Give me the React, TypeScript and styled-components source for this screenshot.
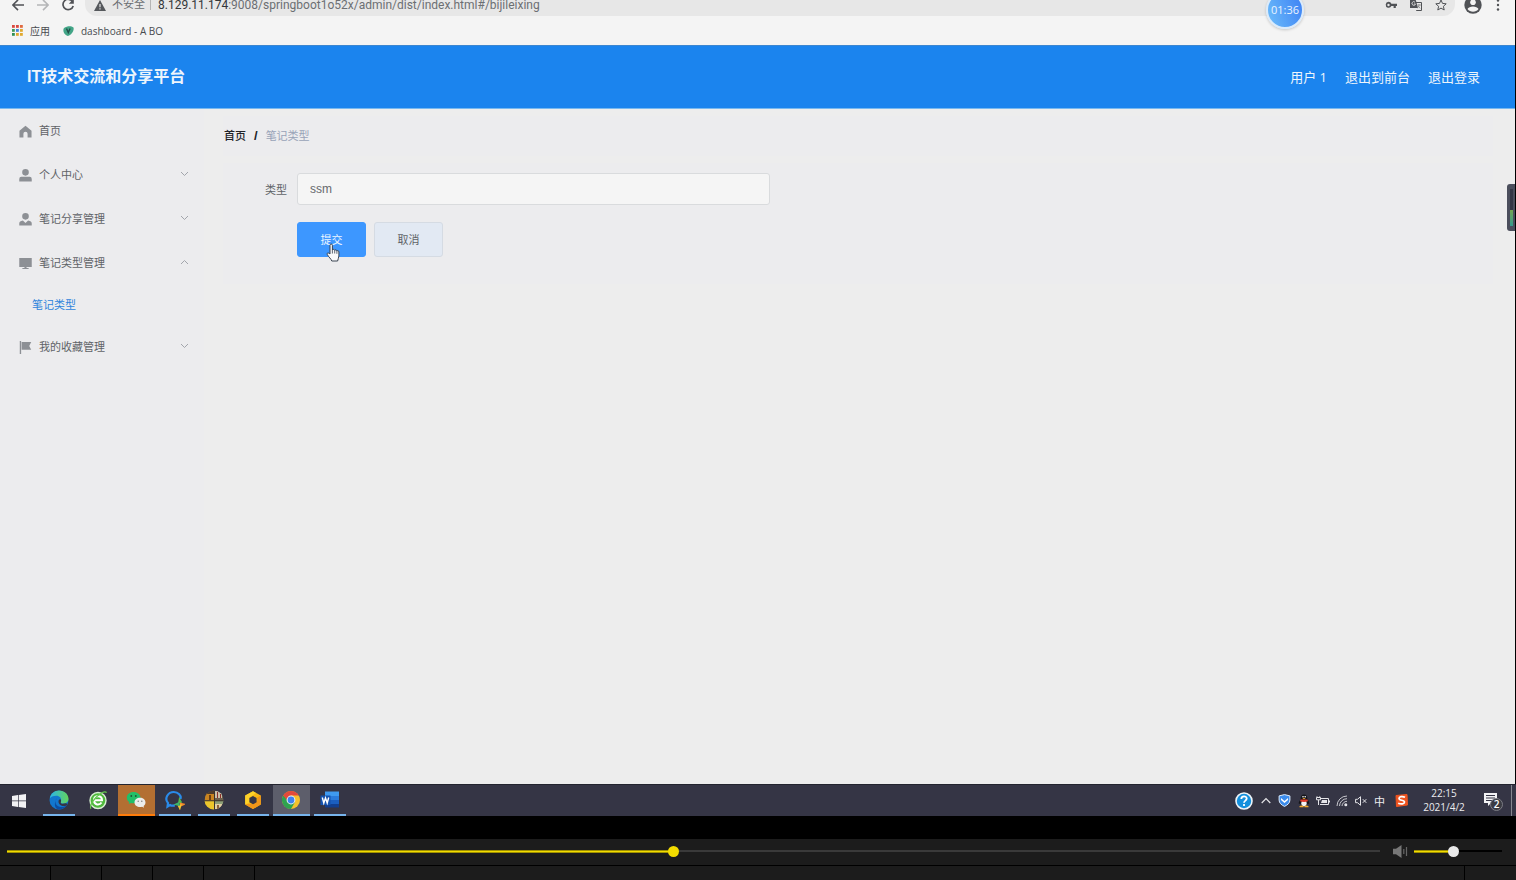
import React from "react";
import styled, { createGlobalStyle, css } from "styled-components";

const ui = `"Open Sans", "Noto Sans CJK SC", sans-serif`;
const web = `"Liberation Sans", "Noto Sans CJK SC", sans-serif`;

const GlobalStyle = createGlobalStyle`
  *, *::before, *::after { box-sizing: border-box; }
  html, body { margin: 0; padding: 0; background: #000; }
  button, input { font: inherit; margin: 0; }
  button { border: 0; padding: 0; background: none; color: inherit; }
  a { color: inherit; text-decoration: none; }
  svg { display: block; flex: none; }
`;

const Page = styled.div`
  display: flex;
  flex-direction: column;
  min-height: 100vh;
  font-family: ${web};
`;

const Desktop = styled.div`
  position: relative;
  flex: 1;
  display: flex;
  flex-direction: column;
  background: #ededed;
`;

const Window = styled.div`
  flex: 1;
  display: flex;
  flex-direction: column;
  border-right: 1px solid #000;
`;

/* Browser chrome */
const Browser = styled.header`
  background: #f4f4f4;
  font-family: ${ui};
  color: #5f6368;
`;

const Toolbar = styled.div`
  display: flex;
  align-items: flex-start;
  height: 16px;
  padding: 0 5px;
`;

const NavButton = styled.button<{ $dim?: boolean }>`
  display: flex;
  align-items: center;
  justify-content: center;
  width: 25px;
  height: 10px;
  color: ${(p) => (p.$dim ? "#b4b5b7" : "#505256")};
`;

const Address = styled.div`
  flex: 1;
  display: flex;
  align-items: center;
  height: 16px;
  margin: 0 5px;
  padding: 0 2px 6px 9px;
  border-radius: 0 0 12px 12px;
  background: #e7e7e7;
  font: 400 12px/10px Roboto, ${ui};
  white-space: nowrap;
`;

const Unsafe = styled.span`
  margin-left: 6px;
  padding-right: 5px;
  font-size: 11px;
  color: #6b6e72;
`;

const Url = styled.span`
  flex: 1;
  padding-left: 7px;
  color: #6c6f73;
  b { font-weight: 400; color: #333639; }
`;

const Separator = styled.i`
  width: 1px;
  height: 10px;
  background: #b5b5b5;
`;

const Bookmarks = styled.nav`
  display: flex;
  align-items: center;
  gap: 13px;
  height: 29px;
  padding: 0 12px;
  font-size: 10px;
  color: #484b4f;
`;

const Bookmark = styled.a`
  display: flex;
  align-items: center;
  gap: 7px;
`;

/* Admin site */
const SiteHeader = styled.header`
  display: flex;
  align-items: center;
  justify-content: space-between;
  height: 64px;
  padding: 0 35px 0 27px;
  background: #1b84ee;
  border-top: 1px solid #3c86d0;
  border-bottom: 1px solid #78b9f0;
  color: #eef5fc;
`;

const SiteTitle = styled.h1`
  margin: 0;
  font: 700 16px/24px ${web};
`;

const AccountLinks = styled.nav`
  display: flex;
  gap: 18px;
  font: 400 13px/20px ${ui};
`;

const Body = styled.div`
  flex: 1;
  display: flex;
`;

const Sidebar = styled.nav`
  width: 204px;
  flex: none;
  background: #ececee;
`;

const menuRow = css`
  display: flex;
  align-items: center;
  width: 100%;
  font-size: 11px;
  line-height: 16px;
  text-align: left;
`;

const MenuItem = styled.button`
  ${menuRow}
  height: 44px;
  padding: 0 15px 0 19px;
  gap: 7px;
  color: #606367;
  span { flex: 1; }
`;

const SubItem = styled.a`
  ${menuRow}
  height: 40px;
  padding-left: 32px;
  color: #2f84dc;
`;

const Content = styled.main`
  flex: 1;
  display: flex;
  flex-direction: column;
  gap: 7px;
  padding: 7px 22px 0 19px;
`;

const Crumbs = styled.nav`
  display: flex;
  align-items: center;
  gap: 8px;
  height: 40px;
  padding-left: 1px;
  background: #ececee;
  font-size: 11px;
  line-height: 16px;
  color: #98a3b8;
  a { color: #202328; font-weight: 500; }
  b { color: #202328; font-size: 13px; }
`;

const FormCard = styled.form`
  display: flex;
  flex-direction: column;
  gap: 17px;
  height: 121px;
  padding: 10px 0 0 42px;
  background: #ececee;
  font-size: 11px;
  color: #606367;
`;

const Field = styled.div`
  display: flex;
  align-items: center;
  gap: 10px;
`;

const TextInput = styled.input`
  width: 473px;
  height: 32px;
  padding: 0 12px;
  border: 1px solid #d9dbdd;
  border-radius: 3px;
  background: #f5f5f5;
  color: #67696d;
  font-size: 12px;
  outline: none;
`;

const Actions = styled.div`
  display: flex;
  gap: 8px;
  padding-left: 32px;
`;

const ActionButton = styled.button<{ $primary?: boolean }>`
  width: 69px;
  height: 35px;
  padding-bottom: 2px;
  border-radius: 3px;
  border: 1px solid ${(p) => (p.$primary ? "#3d97ff" : "#d5dbe3")};
  background: ${(p) => (p.$primary ? "#3d97ff" : "#e2e9f3")};
  color: ${(p) => (p.$primary ? "#eef6ff" : "#606367")};
`;

/* Floating overlays on the desktop */
const Cursor = styled.svg`
  position: absolute;
  left: 326px;
  top: 243px;
`;

const Timer = styled.div`
  position: absolute;
  top: -9px;
  right: 212px;
  width: 38px;
  height: 38px;
  border: 2px solid #dcebfa;
  border-radius: 50%;
  background: linear-gradient(70deg, #6cbcfa, #3c80f4);
  box-shadow: 0 1px 3px #0003;
  color: #eaf4ff;
  font: 400 11px/34px ${ui};
  text-align: center;
`;

const Meter = styled.div`
  position: absolute;
  top: 184px;
  right: 0;
  width: 9px;
  height: 47px;
  padding: 5px 2px 5px 3px;
  border-radius: 3px 0 0 3px;
  border-right: 1px solid #000;
  background: #4b4e5c;
  i {
    display: block;
    height: 100%;
    background: linear-gradient(#343746 56%, #74a552 56%, #359a8c);
  }
`;

/* Windows taskbar */
const Taskbar = styled.footer`
  display: flex;
  height: 32px;
  border-top: 1px solid #23242f;
  background: #353545;
  color: #ececf0;
  font-family: ${ui};
`;

const StartButton = styled.button`
  width: 40px;
  padding-left: 12px;
`;

const Apps = styled.div`
  display: grid;
  grid-template-columns: repeat(8, 1fr);
  column-gap: 1px;
  width: 309px;
`;

const AppButton = styled.button<{ $tone?: "alert" | "active"; $open?: boolean }>`
  display: flex;
  flex-direction: column;
  align-items: center;
  justify-content: space-between;
  padding-top: 5px;
  background: ${(p) => (p.$tone === "alert" ? "#b36f32" : p.$tone === "active" ? "#5d5e6b" : "none")};
  &::after {
    content: "";
    width: ${(p) => (p.$tone ? "100%" : "32px")};
    height: 2px;
    background: ${(p) => (p.$tone === "alert" ? "#ff7c0a" : p.$open ? "#77b4ec" : "none")};
  }
`;

const Tray = styled.div`
  display: flex;
  align-items: stretch;
  margin-left: auto;
  padding-right: 4px;
`;

const TrayButton = styled.button<{ $wide?: boolean }>`
  display: flex;
  align-items: center;
  justify-content: center;
  width: ${(p) => (p.$wide ? 24 : 19)}px;
  font-size: 11px;
`;

const Clock = styled.time`
  width: 62px;
  padding-top: 1px;
  font-size: 10px;
  line-height: 14px;
  text-align: center;
`;

const Notices = styled.button`
  display: flex;
  align-items: center;
  justify-content: center;
  width: 36px;
`;

const PeekEdge = styled.i`
  width: 1px;
  background: #85868f;
`;

/* Video player */
const Letterbox = styled.div`
  height: 23px;
  background: #000;
`;

const Controls = styled.div`
  display: flex;
  align-items: center;
  height: 27px;
  padding: 0 14px 2px 7px;
  border-bottom: 1px solid #000;
  background: #1c1c1c;
`;

const Slider = styled.input<{ $at: number; $thumb: string; $rest: string }>`
  appearance: none;
  height: 12px;
  background:
    linear-gradient(#f2dc00, #f2dc00) 0 50% / ${(p) => p.$at}% 1px no-repeat,
    linear-gradient(#a09100, #a09100) 0 50% / ${(p) => p.$at}% 3px no-repeat,
    linear-gradient(${(p) => p.$rest}, ${(p) => p.$rest}) 0 50% / 100% 2px no-repeat;
  &::-webkit-slider-thumb {
    appearance: none;
    width: 11px;
    height: 11px;
    border-radius: 50%;
    background: ${(p) => p.$thumb};
  }
`;

const Seek = styled(Slider)`
  flex: 1;
  min-width: 0;
`;

const Volume = styled(Slider)`
  width: 88px;
`;

const MuteButton = styled.button`
  padding: 0 6px 0 13px;
`;

const Strip = styled.div`
  display: flex;
  height: 14px;
  background: #1c1c1c;
  i { width: 51px; border-right: 1px solid #000; }
  i:last-child { margin-left: auto; border-right: 0; border-left: 1px solid #000; width: 52px; }
`;

const Chevron = ({ up }: { up?: boolean }) => (
  <svg width="9" height="8" viewBox="0 0 9 8" fill="none" stroke="#a2a5ab">
    <path d={up ? "M1 5l3.500-3.500L8 5" : "M1 1l3.500 3.500L8 1"} />
  </svg>
);

const menuIcons = {
  home: <path d="M6 .8L.2 5.600V12H4V8.500a2 2 0 0 1 4 0V12h3.800V5.600z" />,
  user: <path d="M6 0a3 3 0 0 1 0 6.400A3 3 0 0 1 6 0zM0 12V9.500Q0 7.500 2 7.500h8q2 0 2 2V12z" />,
  custom: <path d="M6 0a3 3 0 0 1 0 6.400A3 3 0 0 1 6 0zM0 12V10Q0 7.800 3.500 7.200L6 9.500l2.500-2.300Q12 7.800 12 10v2z" />,
  screen: <path d="M0 1h12v8.500H0zM5 9.500h2v1H5zM3 10.600h6v1H3z" />,
  flag: <path d="M.5 0h1.300v12.500H.5zM2.300 1H11.500L9.600 4.800l1.900 3.700H2.300z" />,
};

const menu: { icon: keyof typeof menuIcons; label: string; arrow?: "up" | "down"; child?: string }[] = [
  { icon: "home", label: "首页" },
  { icon: "user", label: "个人中心", arrow: "down" },
  { icon: "custom", label: "笔记分享管理", arrow: "down" },
  { icon: "screen", label: "笔记类型管理", arrow: "up", child: "笔记类型" },
  { icon: "flag", label: "我的收藏管理", arrow: "down" },
];

const gridColors = ["#d9493f", "#d9493f", "#e0693f", "#3f9a58", "#4285dd", "#e0a92e", "#2f8f55", "#e0a92e", "#e0a92e"];

const EdgeIcon = () => (
  <svg width="20" height="20" viewBox="0 0 20 20">
    <defs>
      <linearGradient id="edgeTop"><stop stopColor="#2cb5e8" /><stop offset="1" stopColor="#63d35b" /></linearGradient>
    </defs>
    <circle cx="10" cy="10" r="9.500" fill="#1277cf" />
    <path d="M.7 8.500C1.600 3.400 5.400.4 10 .4c5.500 0 9.500 4 9.500 8.300 0 3-2.200 4.800-5 4.800-2 0-3-.7-2.700-1.600C13 8 10.500 5.800 7.300 5.800 4 5.800 1.600 7 .7 8.500z" fill="url(#edgeTop)" />
    <path d="M8 8c-3 3-1.500 8.500 3.500 9 2.500.3 5-.6 6.500-2-1.800 3-5 4.600-8.300 4.500C5.500 19 4.500 13 8 8z" fill="#0c4da2" />
    <path d="M11.800 11.900c-.5 1.200 1 2.500 4.500 1.400l2.500.5-1.300 1.700c-4 1.500-8-.5-8-4 0-1.500 1-2.500 1.800-2.200.8.400 1 1.400.5 2.600z" fill="#353545" />
  </svg>
);

const Browser360Icon = () => (
  <svg width="20" height="20" viewBox="0 0 20 20">
    <circle cx="10" cy="10.500" r="8" fill="#4eb83c" stroke="#d8efd2" strokeWidth="1.400" />
    <path d="M6 10.300h8c0-5.300-8-5.300-8 0 0 5 5.600 5.200 7.500 2.200" fill="none" stroke="#fff" strokeWidth="2" />
    <path d="M3 18.800c-2-3 3-11 10-15.500 2.500-1.600 5-2 5.500-.5" fill="none" stroke="#62c84c" strokeWidth="1.200" />
  </svg>
);

const WeChatIcon = () => (
  <svg width="20" height="20" viewBox="0 0 20 20">
    <path d="M7.500 2C3.500 2 .8 4.500.8 7.700c0 1.800.9 3.300 2.400 4.300l-.5 2 2.300-1.100c4.500 1.300 9.500-.9 9.500-5.300C14.500 4.500 11.500 2 7.500 2z" fill="#22bf68" />
    <path d="M14 7.800c3 0 5.500 2 5.500 4.700 0 1.400-.7 2.700-1.900 3.500l.4 1.700-1.900-.9c-4 .9-7.600-1-7.600-4.300C8.500 9.800 11 7.800 14 7.800z" fill="#ececea" />
    <g fill="#1b5535"><circle cx="5.300" cy="6" r=".9" /><circle cx="9.800" cy="6" r=".9" /></g>
    <g fill="#777"><circle cx="12.200" cy="11.300" r=".7" /><circle cx="15.800" cy="11.300" r=".7" /></g>
  </svg>
);

const WorkChatIcon = () => (
  <svg width="20" height="20" viewBox="0 0 20 20">
    <path d="M9.800 15.400C7.500 16 5.800 15.500 5 15L2.500 16.500 3 13C-1 8.500 3 2 8.800 2 13.200 2 16.500 5.500 15.500 9" fill="none" stroke="#2a8bea" strokeWidth="2.200" />
    <path d="M14.500 9l1.700 3.200-2.400.8z" fill="#50bd4d" stroke="#50bd4d" strokeWidth="1.400" />
    <path d="M19 14.300l-3.100 1.500-.4-2.300z" fill="#f2892c" stroke="#f2892c" strokeWidth="1.400" />
    <path d="M14.800 18.500l-1.300-2.700 2.300-.8z" fill="#f5c42c" stroke="#f5c42c" strokeWidth="1.400" />
    <path d="M10.500 14.500l3-1.500.5 2.200z" fill="#3cb56c" stroke="#3cb56c" strokeWidth="1.400" />
  </svg>
);

const PhotoIcon = () => (
  <svg width="20" height="20" viewBox="0 0 20 20">
    <clipPath id="photoRound"><circle cx="10" cy="10" r="9.500" /></clipPath>
    <g clipPath="url(#photoRound)">
      <path d="M0 0h20v20H0z" fill="#6c604e" />
      <path d="M1 3h9v8H1z" fill="#c98420" /><path d="M2 0h8v4H2z" fill="#4c3b2b" /><path d="M5 5h2v5H5z" fill="#6b4014" />
      <path d="M11 1h7v7h-7z" fill="#c8bfa8" /><path d="M13 2h1v6h-1zM16 4h1v4h-1z" fill="#8b3029" />
      <path d="M0 11h10v9H0z" fill="#ecc62c" /><path d="M11 11h9v3h-9z" fill="#8d9f78" />
      <path d="M11 14h7v5h-7z" fill="#e0cfa4" /><path d="M13 15h2v5h-2z" fill="#8c6239" />
      <path d="M10 0h1v20h-1zM0 10.300h20v1H0z" fill="#3a342c" />
    </g>
  </svg>
);

const HexIcon = () => (
  <svg width="20" height="20" viewBox="0 0 20 20">
    <path d="M10 1.300L17.800 5.500v9L10 19l-7.800-4.500v-9z" fill="#f8b714" />
    <path d="M17.800 5.500v9L10 19l-7.800-4.500 8-1 4-2.500V7.500z" fill="#f0961a" />
    <path d="M2.200 5.500L10 1.300 13 3 6.500 7.500v5l-4.300 2z" fill="#fdd22a" />
    <path d="M10 6l3.600 2v4.300L10 14.300l-3.600-2V8z" fill="#353545" />
  </svg>
);

const ChromeIcon = () => (
  <svg width="20" height="20" viewBox="0 0 20 20">
    <circle cx="10" cy="10" r="9" fill="#f4c22c" />
    <path d="M10 10L2.200 5.500A9 9 0 0 0 10 19l4-7z" fill="#2fa34f" />
    <path d="M10 10H6L2.200 5.500A9 9 0 0 1 17.800 5.500H10z" fill="#e34a3b" />
    <circle cx="10" cy="10" r="4.400" fill="#f3f3f3" /><circle cx="10" cy="10" r="3.400" fill="#3f83ee" />
  </svg>
);

const WordIcon = () => (
  <svg width="20" height="20" viewBox="0 0 20 20">
    <path d="M5 1.500h14v5H5z" fill="#3f9af0" /><path d="M5 6h14v4.500H5z" fill="#2a7bdc" />
    <path d="M5 10h14v4.500H5z" fill="#1b5fc0" /><path d="M5 14h14v3.500H5z" fill="#123f8f" />
    <path d="M.5 5.500h10v9.500H.5z" fill="#1552ad" />
    <path d="M2.300 7.500L3.800 13l1.700-5 1.700 5 1.500-5.500" fill="none" stroke="#fff" strokeWidth="1.400" />
  </svg>
);

const apps: { name: string; icon: React.ReactNode; open?: boolean; tone?: "alert" | "active" }[] = [
  { name: "Edge", icon: <EdgeIcon />, open: true },
  { name: "360", icon: <Browser360Icon /> },
  { name: "WeChat", icon: <WeChatIcon />, open: true, tone: "alert" },
  { name: "WeCom", icon: <WorkChatIcon />, open: true },
  { name: "Photos", icon: <PhotoIcon />, open: true },
  { name: "Recorder", icon: <HexIcon />, open: true },
  { name: "Chrome", icon: <ChromeIcon />, open: true, tone: "active" },
  { name: "Word", icon: <WordIcon />, open: true },
];

const BrowserBar = () => (
  <Browser>
    <Toolbar>
      <NavButton aria-label="Back">
        <svg width="12" height="12" viewBox="0 0 14 14" fill="none" stroke="currentColor" strokeWidth="1.800"><path d="M14 7H1.500M7 1L1 7l6 6" /></svg>
      </NavButton>
      <NavButton aria-label="Forward" $dim>
        <svg width="12" height="12" viewBox="0 0 14 14" fill="none" stroke="currentColor" strokeWidth="1.800"><path d="M0 7h12.500M7 1l6 6-6 6" /></svg>
      </NavButton>
      <NavButton aria-label="Reload">
        <svg width="14" height="14" viewBox="0 0 14 14" fill="none" stroke="currentColor" strokeWidth="1.700"><path d="M11.500 3.500A5.200 5.200 0 1 0 12.200 8" /><path d="M12.800.8v5H7.800z" fill="currentColor" stroke="none" /></svg>
      </NavButton>
      <Address>
        <svg width="12" height="11" viewBox="0 0 12 11"><path d="M6 0l6 11H0z" fill="#55585c" /><path d="M5.400 4h1.200v3.200H5.400zM5.400 8.200h1.200v1.200H5.400z" fill="#e7e7e7" /></svg>
        <Unsafe>不安全</Unsafe>
        <Separator />
        <Url><b>8.129.11.174</b>:9008/springboot1o52x/admin/dist/index.html#/bijileixing</Url>
        <NavButton aria-label="Passwords">
          <svg width="12" height="8" viewBox="0 0 12 8"><path d="M3.500.8a3 3 0 0 1 2.900 2H12v2.300h-1.200V7H8.600V5.100H6.400A3 3 0 1 1 3.500.8zm0 2a1.200 1.200 0 1 0 0 2.400 1.200 1.200 0 0 0 0-2.400z" fill="currentColor" /></svg>
        </NavButton>
        <NavButton aria-label="Translate">
          <svg width="12" height="12" viewBox="0 0 12 12"><path d="M5 3.500h6.500v8H6.200" fill="none" stroke="currentColor" /><path d="M0 0h5.500l2.500 9H0z" fill="currentColor" /><path d="M5 3.200A1.800 1.800 0 1 0 5.500 5H4" fill="none" stroke="#ddd" strokeWidth=".9" /><path d="M7.500 6h3.500M9 5v1c0 1.500-.8 2.500-1.500 3M8.200 7l2 2.300" fill="none" stroke="#888" strokeWidth=".8" /></svg>
        </NavButton>
        <NavButton aria-label="Bookmark">
          <svg width="12" height="12" viewBox="0 0 12 12"><path d="M6 1l1.500 3.400 3.700.4-2.800 2.500.8 3.700L6 9.100 2.800 11l.8-3.700L.8 4.800l3.700-.4z" fill="none" stroke="currentColor" /></svg>
        </NavButton>
      </Address>
      <NavButton aria-label="Profile">
        <svg viewBox="0 0 18 18" width="18" height="18"><circle cx="9" cy="9" r="8.700" fill="currentColor" /><circle cx="9" cy="6.300" r="2.800" fill="#f4f4f4" /><path d="M3.500 13c1.500-3.500 9.500-3.500 11 0-2.500 3.500-8.500 3.500-11 0z" fill="#f4f4f4" /></svg>
      </NavButton>
      <NavButton aria-label="Menu">
        <svg width="14" height="14" viewBox="0 0 14 14" fill="currentColor"><circle cx="7" cy="2.500" r="1.200" /><circle cx="7" cy="7" r="1.200" /><circle cx="7" cy="11.500" r="1.200" /></svg>
      </NavButton>
    </Toolbar>
    <Bookmarks>
      <Bookmark href="#apps">
        <svg width="11" height="11" viewBox="0 0 11 11">
          {gridColors.map((c, i) => <rect key={i} x={(i % 3) * 4} y={Math.floor(i / 3) * 4} width="2.800" height="2.800" fill={c} />)}
        </svg>
        应用
      </Bookmark>
      <Bookmark href="#dashboard">
        <svg width="11" height="10" viewBox="0 0 11 10"><path d="M1 2C4 0 8-.5 10.500 1.500 11.500 5 8 9 5 10 2 9.500-1 5 1 2z" fill="#42a587" /><path d="M3.500 2.500l1.800 4 1.800-4" fill="none" stroke="#244f4a" strokeWidth="1.400" /></svg>
        dashboard - A BO
      </Bookmark>
    </Bookmarks>
  </Browser>
);

const TaskbarRow = () => (
  <Taskbar>
    <StartButton aria-label="Start">
      <svg width="14" height="14" viewBox="0 0 14 14" fill="#f2f2f4"><path d="M0 2l6-.9v5.500H0zM6.700 1L14 0v6.600H6.700zM0 7.300h6v5.600L0 12zM6.700 7.300H14V14l-7.300-1z" /></svg>
    </StartButton>
    <Apps>
      {apps.map((a) => <AppButton key={a.name} aria-label={a.name} $open={a.open} $tone={a.tone}>{a.icon}</AppButton>)}
    </Apps>
    <Tray>
      <TrayButton $wide aria-label="Help">
        <svg width="18" height="18" viewBox="0 0 18 18"><circle cx="9" cy="9" r="8" fill="#1590dd" stroke="#eef4f8" strokeWidth="1.600" /><path d="M6.300 7c0-3.600 5.400-3.500 5.400-.4C11.700 8.600 9 8.600 9 10.800M9 12v2" fill="none" stroke="#fff" strokeWidth="1.800" /></svg>
      </TrayButton>
      <TrayButton aria-label="Show hidden icons">
        <svg width="10" height="7" viewBox="0 0 10 7" fill="none" stroke="#e4e4e8" strokeWidth="1.200"><path d="M.7 6L5 1.500 9.300 6" /></svg>
      </TrayButton>
      <TrayButton aria-label="Security">
        <svg width="13" height="13" viewBox="0 0 12 13"><path d="M6 .6l5.400 1.300V6c0 3-2.300 5-5.400 6.400C2.900 11 .6 9 .6 6V1.900z" fill="#3c8cec" stroke="#dcecff" /><path d="M2.500 4L6 7l3.500-3v2L6 9 2.500 6z" fill="#fff" /></svg>
      </TrayButton>
      <TrayButton aria-label="QQ">
        <svg width="12" height="14" viewBox="0 0 12 14"><path d="M6 .5c2.500 0 3.500 2 3.300 4.500 1 1.500 2.400 3.500 1.800 5L9.800 9.500C9 12 3 12 2.200 9.500L.9 10C.3 8.500 1.700 6.500 2.700 5 2.500 2.500 3.500.5 6 .5z" fill="#15151a" /><ellipse cx="6" cy="9.200" rx="2.700" ry="2.800" fill="#f3f3f3" /><path d="M2.500 5.500h7l.4 1.700c-2 1-5.800 1-7.800 0z" fill="#e23b2d" /><path d="M1.500 12.300c1-1 3-1 4.200 0v1H1.500zM6.300 12.300c1-1 3-1 4.200 0v1H6.300zM4.300 4h3.400L6 5.200z" fill="#f2aa2c" /><circle cx="5" cy="2.800" r=".8" fill="#fff" /><circle cx="7.200" cy="2.800" r=".8" fill="#fff" /></svg>
      </TrayButton>
      <TrayButton aria-label="Battery">
        <svg width="14" height="10" viewBox="0 0 14 10" fill="none" stroke="#e4e4e8"><path d="M5 2.500h7.500v6H4M13.500 4.500v2M.5 1.500h4v2.300h-4zM2.500 4v5M1 .3v1M3.700.3v1" /><path d="M6 4h5v3H5z" fill="#e4e4e8" stroke="none" /></svg>
      </TrayButton>
      <TrayButton aria-label="Network">
        <svg width="12" height="12" viewBox="0 0 12 12" fill="none" stroke="#c6c6cc"><path d="M1 11A10 10 0 0 1 11 1M3.500 11A7.500 7.500 0 0 1 11 3.700M6 11a5 5 0 0 1 5-4.700" /><circle cx="9.800" cy="9.800" r="1.500" fill="#e4e4e8" stroke="none" /></svg>
      </TrayButton>
      <TrayButton aria-label="Muted">
        <svg width="12" height="10" viewBox="0 0 12 10" fill="none" stroke="#e4e4e8"><path d="M.6 3.300h1.900L5.500.7v8.600L2.500 6.700H.6zM7.800 3.200l3.500 3.600M11.300 3.200L7.800 6.800" /></svg>
      </TrayButton>
      <TrayButton aria-label="Input method">中</TrayButton>
      <TrayButton $wide aria-label="Sogou">
        <svg width="13" height="13" viewBox="0 0 13 13"><path d="M1 1.500L12 .5l.5 10.500L1.500 12.500z" fill="#ee5420" stroke="#ee5420" strokeLinejoin="round" /><path d="M10 3.300C7.500 2 4 2.500 4 4.500c0 2.300 5.500 1.200 5.500 3.500 0 2-3.500 2.500-6.300 1.200" fill="none" stroke="#fff" strokeWidth="1.700" /></svg>
      </TrayButton>
      <Clock>22:15<br />2021/4/2</Clock>
      <Notices aria-label="2 notifications">
        <svg width="20" height="20" viewBox="0 0 20 20"><path d="M1 2h13v10H8l-3 3v-3H1z" fill="#f2f2f4" /><path d="M3 4.500h9M3 7h9M3 9.500h6" stroke="#353545" /><circle cx="13.500" cy="13.500" r="6" fill="#3a3b42" stroke="#7c7d85" /><text x="13.500" y="17" fontSize="10" fontWeight="600" textAnchor="middle" fill="#fff">2</text></svg>
      </Notices>
      <PeekEdge />
    </Tray>
  </Taskbar>
);

export default function App() {
  return (
    <Page>
      <GlobalStyle />
      <Desktop>
        <Window>
          <BrowserBar />
          <SiteHeader>
            <SiteTitle>IT技术交流和分享平台</SiteTitle>
            <AccountLinks>
              <span>用户 1</span>
              <a href="#front">退出到前台</a>
              <a href="#logout">退出登录</a>
            </AccountLinks>
          </SiteHeader>
          <Body>
            <Sidebar>
              {menu.map((m) => (
                <React.Fragment key={m.label}>
                  <MenuItem>
                    <svg width="13" height="13" viewBox="0 0 12 12.500" fill="#8d9095">{menuIcons[m.icon]}</svg>
                    <span>{m.label}</span>
                    {m.arrow && <Chevron up={m.arrow === "up"} />}
                  </MenuItem>
                  {m.child && <SubItem href="#/bijileixing">{m.child}</SubItem>}
                </React.Fragment>
              ))}
            </Sidebar>
            <Content>
              <Crumbs>
                <a href="#/">首页</a>
                <b>/</b>
                <span>笔记类型</span>
              </Crumbs>
              <FormCard onSubmit={(e) => e.preventDefault()}>
                <Field>
                  <label htmlFor="type">类型</label>
                  <TextInput id="type" defaultValue="ssm" />
                </Field>
                <Actions>
                  <ActionButton $primary type="submit">提交</ActionButton>
                  <ActionButton type="button">取消</ActionButton>
                </Actions>
              </FormCard>
            </Content>
          </Body>
        </Window>
        <Timer>01:36</Timer>
        <Meter><i /></Meter>
        <Cursor width="14" height="20" viewBox="0 0 14 20">
          <path d="M4 11V2.300C4 .6 6.400.6 6.400 2.300V7c.3-1 2.200-.8 2.300.4.500-.9 2.100-.6 2.200.6.600-.7 2-.4 2 1v4c0 2-1.100 3-1.300 5H5.800C5.300 16 2.500 14 1.300 11.500.6 10 2.300 9.300 4 11z" fill="#fafafa" stroke="#3a4452" />
          <path d="M6.400 7v3.500M8.700 7.500v3M10.900 8v2.800" stroke="#3a4452" strokeWidth=".8" />
        </Cursor>
      </Desktop>
      <TaskbarRow />
      <Letterbox />
      <Controls>
        <Seek type="range" aria-label="Seek" defaultValue={48.5} step={0.1} $at={48.5} $thumb="#f3dc00" $rest="#3a3a3a" />
        <MuteButton aria-label="Mute">
          <svg width="15" height="13" viewBox="0 0 15 13"><path d="M0 3.800h3L8.500 0v13L3 9.200H0z" fill="#777" /><path d="M10.800 4v5M13.500 2v9" stroke="#666" strokeWidth="1.200" /></svg>
        </MuteButton>
        <Volume type="range" aria-label="Volume" defaultValue={44} $at={44} $thumb="#e9e9e9" $rest="#000" />
      </Controls>
      <Strip><i /><i /><i /><i /><i /><i /></Strip>
    </Page>
  );
}
